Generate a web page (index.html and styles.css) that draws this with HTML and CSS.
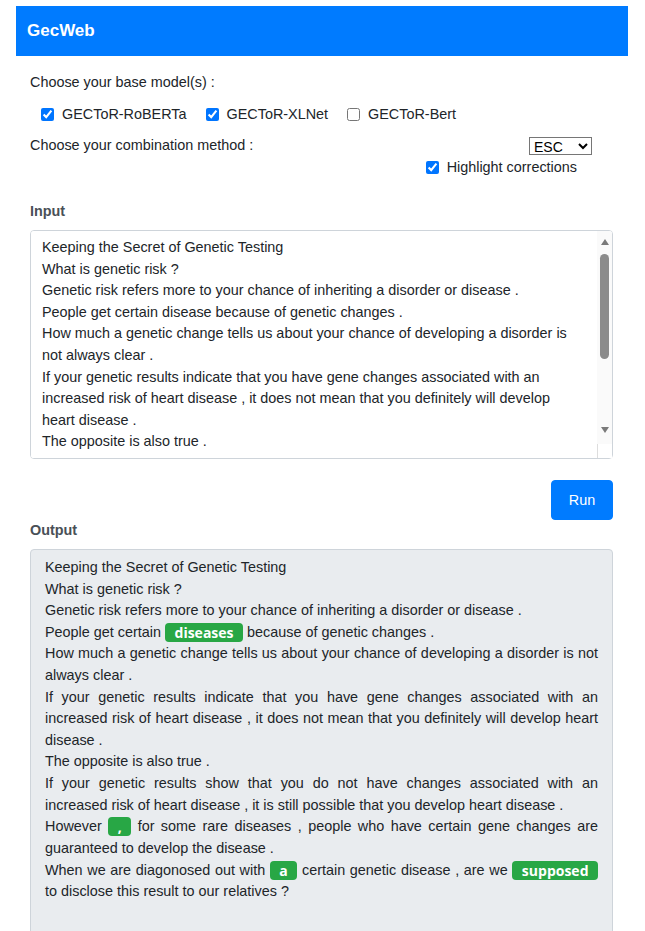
FILE: index.html
```html
<!DOCTYPE html>
<html>
<head>
<meta charset="utf-8">
<link rel="stylesheet" href="styles.css">
</head>
<body>
<div class="page">
  <nav class="navbar"><span class="brand">GecWeb</span></nav>
  <div class="content">
    <div class="line">Choose your base model(s) :</div>
    <div class="models">
      <label class="check"><input type="checkbox" checked><span>GECToR-RoBERTa</span></label>
      <label class="check"><input type="checkbox" checked><span>GECToR-XLNet</span></label>
      <label class="check"><input type="checkbox"><span>GECToR-Bert</span></label>
    </div>
    <div class="combo">
      <span>Choose your combination method :</span>
      <select class="method"><option>ESC</option><option>AVG</option></select>
    </div>
    <div class="highlight">
      <label class="check"><input type="checkbox" checked><span>Highlight corrections</span></label>
    </div>
    <div class="section-title input-title">Input</div>
    <div class="input-wrap">
      <textarea class="input-box">Keeping the Secret of Genetic Testing
What is genetic risk ?
Genetic risk refers more to your chance of inheriting a disorder or disease .
People get certain disease because of genetic changes .
How much a genetic change tells us about your chance of developing a disorder is not always clear .
If your genetic results indicate that you have gene changes associated with an increased risk of heart disease , it does not mean that you definitely will develop heart disease .
The opposite is also true .
If your genetic results show that you do not have changes associated with an increased risk of heart disease , it is still possible that you develop heart disease .
However for some rare diseases , people who have certain gene changes are guaranteed to develop the disease .
When we are diagonosed out with certain genetic disease , are we suppose to disclose this result to our relatives ?</textarea>
      <div class="scrollbar" aria-hidden="true">
        <span class="arrow-up"></span>
        <span class="thumb"></span>
        <span class="arrow-down"></span>
      </div>
    </div>
    <div class="actions"><button class="run">Run</button></div>
    <div class="section-title output-title">Output</div>
    <div class="output-box">
      <div>Keeping the Secret of Genetic Testing</div>
      <div>What is genetic risk ?</div>
      <div>Genetic risk refers more to your chance of inheriting a disorder or disease .</div>
      <div>People get certain <span class="badge">diseases</span> because of genetic changes .</div>
      <div>How much a genetic change tells us about your chance of developing a disorder is not always clear .</div>
      <div>If your genetic results indicate that you have gene changes associated with an increased risk of heart disease , it does not mean that you definitely will develop heart disease .</div>
      <div>The opposite is also true .</div>
      <div>If your genetic results show that you do not have changes associated with an increased risk of heart disease , it is still possible that you develop heart disease .</div>
      <div>However <span class="badge">,</span> for some rare diseases , people who have certain gene changes are guaranteed to develop the disease .</div>
      <div>When we are diagonosed out with <span class="badge">a</span> certain genetic disease , are we <span class="badge">supposed</span> to disclose this result to our relatives ?</div>
    </div>
  </div>
</div>
</body>
</html>
```
FILE: styles.css
```css
* { box-sizing: border-box; }
html, body { margin: 0; padding: 0; background: #fff; }
body {
  font-family: "Liberation Sans", Arial, sans-serif;
  font-size: 14.4px;
  line-height: 1.5;
  color: #212529;
}
.page {
  padding: 6px 17px 0 16px;
}
.navbar {
  height: 50px;
  background: #007bff;
  display: flex;
  align-items: center;
  padding-left: 11px;
}
.brand {
  color: #fff;
  font-weight: bold;
  font-size: 17px;
}
.content {
  padding: 15px 15px 0 14px;
}
.line { height: 22px; line-height: 22px; }
.models {
  display: flex;
  padding-left: 11px;
  margin-top: 11px;
  gap: 19px;
  height: 22px;
  align-items: center;
}
.check {
  display: inline-flex;
  align-items: center;
  gap: 8px;
}
.check input {
  margin: 0;
  width: 13px;
  height: 13px;
}
.combo {
  display: flex;
  justify-content: space-between;
  align-items: center;
  margin-top: 9px;
  height: 22px;
}
.method {
  margin-right: 21px;
  width: 63px;
  height: 18px;
  font-family: "Liberation Sans", Arial, sans-serif;
  font-size: 14px;
  padding: 0;
  border: 1px solid #767676;
  border-radius: 0;
  background: #fff;
  color: #000;
}
.highlight {
  display: flex;
  justify-content: flex-end;
  padding-right: 36px;
  height: 22px;
  align-items: center;
}
.section-title {
  font-weight: bold;
  color: #495057;
  height: 22px;
  line-height: 22px;
}
.input-title { margin-top: 21px; }
.input-wrap {
  position: relative;
  margin-top: 8px;
}
.input-wrap::after {
  content: "";
  position: absolute;
  left: 1px;
  right: 16px;
  bottom: 1px;
  height: 5px;
  background: #fff;
  border-radius: 0 0 0 3px;
}
.input-box {
  display: block;
  width: 100%;
  height: 229px;
  padding: 6px 26px 5px 11px;
  border: 1px solid #ced4da;
  border-radius: 4px;
  font-family: "Liberation Sans", Arial, sans-serif;
  font-size: 14.4px;
  line-height: 1.5;
  color: #212529;
  resize: vertical;
  overflow-y: scroll;
}
.input-box::-webkit-resizer {
  background: #fff;
  border-top: 1px solid #ddd;
  border-left: 1px solid #ddd;
}
.scrollbar {
  position: absolute;
  top: 1px;
  right: 1px;
  width: 15px;
  height: 213px;
  background: #fafafa;
  display: flex;
  flex-direction: column;
  align-items: center;
  border-top-right-radius: 3px;
}
.arrow-up {
  margin-top: 8px;
  width: 0;
  height: 0;
  border-left: 4.5px solid transparent;
  border-right: 4.5px solid transparent;
  border-bottom: 6px solid #7a7a7a;
}
.thumb {
  margin-top: 9px;
  width: 9px;
  height: 105px;
  background: #8b8b8b;
  border-radius: 5px;
}
.arrow-down {
  margin-top: auto;
  margin-bottom: 11px;
  width: 0;
  height: 0;
  border-left: 4.5px solid transparent;
  border-right: 4.5px solid transparent;
  border-top: 6px solid #7a7a7a;
}
.actions {
  display: flex;
  justify-content: flex-end;
  margin-top: 21px;
}
.run {
  width: 62px;
  height: 40px;
  background: #007bff;
  color: #fff;
  border: 1px solid #007bff;
  border-radius: 4px;
  font-family: "Liberation Sans", Arial, sans-serif;
  font-size: 14.4px;
  padding: 0;
}
.output-title { margin-top: -1px; }
.output-box {
  margin-top: 8px;
  background: #e9ecef;
  border: 1px solid #ced4da;
  border-radius: 4px;
  padding: 7px 14px 6px 14px;
  height: 420px;
  text-align: justify;
  color: #212529;
}
.badge {
  display: inline-block;
  background: #28a745;
  color: #fff;
  font-family: "Open Sans", sans-serif;
  font-weight: bold;
  font-size: 14px;
  line-height: 19px;
  height: 19px;
  padding: 0 9.5px;
  margin-top: 1px;
  border-radius: 4px;
  vertical-align: top;
  text-align: center;
}
```
